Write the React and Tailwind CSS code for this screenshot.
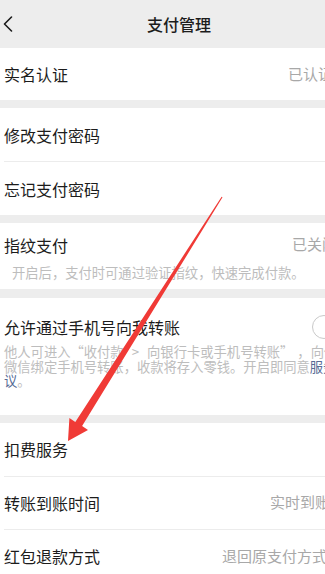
import React from "react";

const font = { fontFamily: '"Noto Sans CJK SC", "Noto Sans", sans-serif' };

function Row({ label, value, valueMr, h = "h-[53px]" }) {
  return (
    <div className={`flex items-center justify-between bg-white pl-[4px] ${h}`}>
      <span className="text-[16px] text-[#1c1c1c] whitespace-nowrap">{label}</span>
      {value ? (
        <span
          className="shrink-0 whitespace-nowrap text-[15px] text-[#a8a8a8]"
          style={{ marginRight: valueMr }}
        >
          {value}
        </span>
      ) : null}
    </div>
  );
}

function Divider() {
  return (
    <div className="bg-white pl-[4px]">
      <div className="h-px bg-[#ececec]" />
    </div>
  );
}

export default function App() {
  return (
    <div
      lang="zh-CN"
      className="relative w-[325px] h-[574px] overflow-hidden bg-[#ededed]"
      style={font}
    >
      {/* Header */}
      <div className="flex h-[48px] items-center bg-[#ededed]">
        <div className="flex w-[20px] items-center pl-[3px]">
          <svg width="10" height="16" viewBox="0 0 10 16" fill="none">
            <polyline
              points="8.5,1 1.5,8 8.5,15"
              stroke="#1c1c1c"
              strokeWidth="1.6"
              strokeLinejoin="round"
              strokeLinecap="round"
            />
          </svg>
        </div>
        <div className="ml-[127px] text-[16px] font-medium text-[#1c1c1c] whitespace-nowrap">
          支付管理
        </div>
      </div>

      {/* 实名认证 */}
      <Row label="实名认证" value="已认证" valueMr="-8px" h="h-[52px]" />

      <div className="h-[8px]" />

      <Row label="修改支付密码" />
      <Divider />
      <Row label="忘记支付密码" />

      <div className="h-[8px]" />

      {/* 指纹支付 */}
      <div className="bg-white pl-[4px] pb-[9px]">
        <div className="flex h-[43px] items-center justify-between">
          <span className="text-[16px] text-[#1c1c1c] whitespace-nowrap">指纹支付</span>
          <span className="shrink-0 whitespace-nowrap text-[15px] text-[#a8a8a8] mr-[-12px]">
            已关闭
          </span>
        </div>
        <div className="pl-[8px] text-[13.3px] leading-[14px] text-[#bdbdbd] whitespace-nowrap">
          开启后，支付时可通过验证指纹，快速完成付款。
        </div>
      </div>

      <div className="h-[9px]" />

      {/* 允许通过手机号向我转账 */}
      <div className="bg-white pl-[4px] pt-[17px] pb-[26px]">
        <div className="flex h-[24px] items-center justify-between">
          <span className="text-[16px] text-[#1c1c1c] whitespace-nowrap">
            允许通过手机号向我转账
          </span>
          <span className="shrink-0 mr-[-11px] h-[24px] w-[24px] rounded-full border-[1.5px] border-[#c9c9c9] bg-white" />
        </div>
        <div className="mt-[6px] text-[13.3px] leading-[14.5px] text-[#bdbdbd] whitespace-nowrap">
          他人可进入
          <span className="inline-block w-[13.3px] text-right">“</span>
          收付款
          <span className="inline-block px-[8px]">&gt;</span>
          向银行卡或手机号转账
          <span className="inline-block w-[13.3px] text-left">”</span>
          <span className="inline-block pl-[4px]">，</span>
          向你的
          <br />
          微信绑定手机号转账，收款将存入零钱。开启即同意
          <span className="text-[#576b95]">服务协</span>
          <br />
          <span className="text-[#576b95]">议</span>。
        </div>
      </div>

      <div className="h-[8px]" />

      <Row label="扣费服务" />
      <Divider />
      <Row label="转账到账时间" value="实时到账" valueMr="-5px" h="h-[52px]" />
      <Divider />
      <Row label="红包退款方式" value="退回原支付方式" valueMr="-2px" />

      {/* Red annotation arrow */}
      <svg
        className="pointer-events-none absolute left-0 top-0"
        width="325"
        height="574"
        viewBox="0 0 325 574"
      >
        <polygon
          points="222.5,197.3 221.6,196.7 75.3,421.9 69.4,418.1 68,441 88,429.9 82.1,426.1"
          fill="#f03a36"
        />
      </svg>
    </div>
  );
}
